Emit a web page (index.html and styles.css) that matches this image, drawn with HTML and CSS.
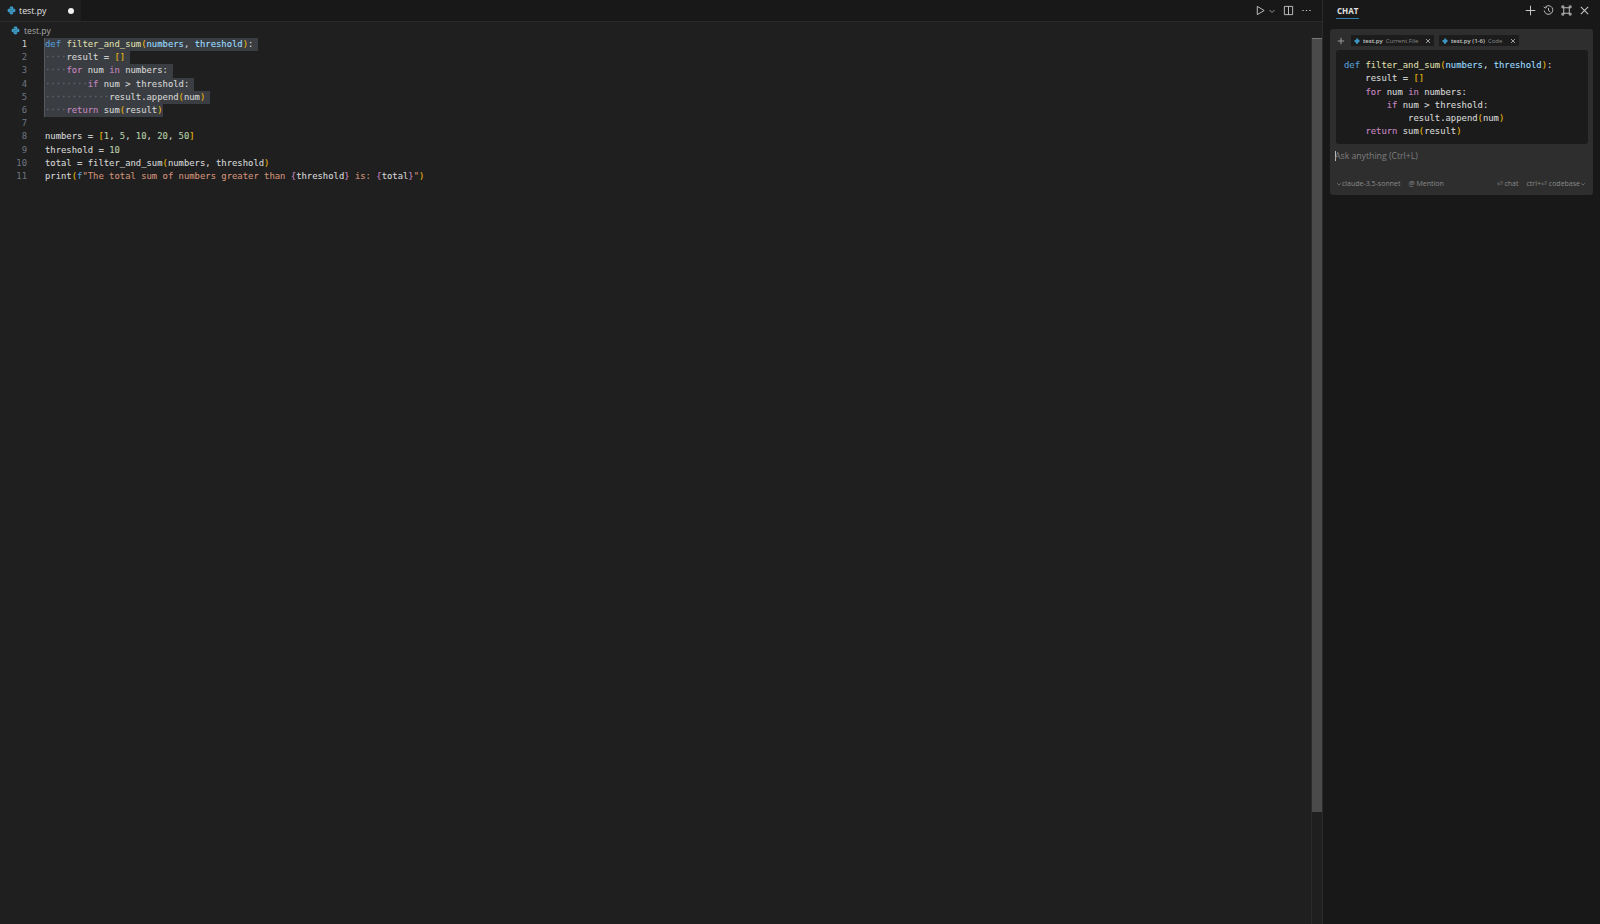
FILE: index.html
```html
<!DOCTYPE html>
<html lang="en">
<head>
<meta charset="utf-8">
<title>test.py</title>
<link rel="stylesheet" href="styles.css">
</head>
<body>
<svg class="defs" width="0" height="0" aria-hidden="true">
  <symbol id="py" viewBox="0 0 16 16">
    <path d="M7.800 1C5.500 1 5 2 5 3v1.500h3.200V5H3.200C2 5 1 6 1 8s1 3.200 2.200 3.200H5V9.600C5 8.600 5.900 7.800 7 7.800h2.600c1 0 1.700-.8 1.700-1.700V3c0-1.100-1.300-2-3.500-2z" fill="#3d9ac4"/>
    <path d="M8.200 15c2.300 0 2.800-1 2.800-2v-1.500H7.800V11h5c1.200 0 2.200-1 2.200-3s-1-3.200-2.200-3.200H11v1.600c0 1-.9 1.800-2 1.800H6.400c-1 0-1.700.8-1.700 1.700V13c0 1.100 1.300 2 3.500 2z" fill="#3d9ac4"/>
  </symbol>
</svg>
<div class="app">
  <main class="editor">
    <header class="tabbar">
      <div class="tab">
        <svg class="py-icon"><use href="#py"/></svg>
        <span class="tab-name">test.py</span>
        <span class="dirty"></span>
      </div>
      <div class="actions">
        <svg class="ico" viewBox="0 0 12 12"><path d="M2.500 1.500v9l7.500-4.500z" fill="none" stroke="#c8c8c8" stroke-width="1"/></svg>
        <svg class="ico-s" viewBox="0 0 8 8"><path d="M1.500 3l2.500 2.500L6.500 3" fill="none" stroke="#a0a0a0" stroke-width=".9"/></svg>
        <svg class="ico split" viewBox="0 0 12 12"><path d="M1.500 1.500h9v9h-9zM6 1.500v9" fill="none" stroke="#c8c8c8" stroke-width="1"/></svg>
        <svg class="ico dots" viewBox="0 0 12 12"><path d="M1.500 6h1.400M5.300 6h1.400M9.100 6h1.400" stroke="#c8c8c8" stroke-width="1.200"/></svg>
      </div>
    </header>
    <nav class="crumb">
      <svg class="py-icon"><use href="#py"/></svg>
      <span>test.py</span>
    </nav>
    <section class="code-area">
      <div class="gutter">
        <div class="active">1</div><div>2</div><div>3</div><div>4</div><div>5</div><div>6</div><div>7</div><div>8</div><div>9</div><div>10</div><div>11</div>
      </div>
      <div class="code">
        <div class="ln"><span class="sel"><i class="k">def</i> <i class="f">filter_and_sum</i><i class="b">(</i><i class="p">numbers</i>, <i class="p">threshold</i><i class="b">)</i>:</span></div>
        <div class="ln"><span class="sel"><i class="d">····</i>result = <i class="b">[]</i></span></div>
        <div class="ln"><span class="sel"><i class="d">····</i><i class="c">for</i> num <i class="c">in</i> numbers:</span></div>
        <div class="ln"><span class="sel"><i class="d">········</i><i class="c">if</i> num &gt; threshold:</span></div>
        <div class="ln"><span class="sel"><i class="d">············</i>result.append<i class="b">(</i>num<i class="b">)</i></span></div>
        <div class="ln"><span class="sel end"><i class="d">····</i><i class="c">return</i> sum<i class="b">(</i>result<i class="b">)</i></span></div>
        <div class="ln">&nbsp;</div>
        <div class="ln">numbers = <i class="b">[</i><i class="n">1</i>, <i class="n">5</i>, <i class="n">10</i>, <i class="n">20</i>, <i class="n">50</i><i class="b">]</i></div>
        <div class="ln">threshold = <i class="n">10</i></div>
        <div class="ln">total = filter_and_sum<i class="b">(</i>numbers, threshold<i class="b">)</i></div>
        <div class="ln">print<i class="b">(</i><i class="k">f</i><i class="s">"The total sum of numbers greater than </i><i class="m">{</i>threshold<i class="m">}</i><i class="s"> is: </i><i class="m">{</i>total<i class="m">}</i><i class="s">"</i><i class="b">)</i></div>
      </div>
    </section>
    <div class="scrollbar"><div class="thumb"></div></div>
  </main>
  <aside class="chat">
    <header class="chat-head">
      <span class="chat-title">CHAT</span>
      <div class="chat-actions">
        <svg class="ico-l" viewBox="0 0 12 12"><path d="M6 .8v10.400M.8 6h10.400" stroke="#c8c8c8" stroke-width="1.100"/></svg>
        <svg class="ico-l" viewBox="0 0 12 12"><path d="M2.600 2.200A4.700 4.700 0 1 1 1.300 6M.9 1.800l1.500 1.700 1.800-1.200M6 3.300V6l2 1.500" fill="none" stroke="#c8c8c8" stroke-width="1"/></svg>
        <svg class="ico-l" viewBox="0 0 12 12"><path d="M3 3h6v6H3zM1 1h2v2H1zM9 1h2v2H9zM1 9h2v2H1zM9 9h2v2H9z" fill="none" stroke="#c8c8c8" stroke-width="1"/></svg>
        <svg class="ico-l" viewBox="0 0 12 12"><path d="M2 2l8 8M10 2l-8 8" stroke="#c8c8c8" stroke-width="1.100"/></svg>
      </div>
    </header>
    <div class="composer">
      <div class="tags">
        <svg class="tag-plus" viewBox="0 0 8 8"><path d="M4 .8v6.400M.8 4h6.400" stroke="#9a9a9a" stroke-width="1"/></svg>
        <span class="tag first"><svg class="tag-py"><use href="#py"/></svg><b>test.py</b><em>Current File</em><svg class="tag-x" viewBox="0 0 6 6"><path d="M1 1l4 4M5 1l-4 4" stroke="#c0c0c0" stroke-width=".8"/></svg></span>
        <span class="tag"><svg class="tag-py"><use href="#py"/></svg><b>test.py (1-6)</b><em>Code</em><svg class="tag-x" viewBox="0 0 6 6"><path d="M1 1l4 4M5 1l-4 4" stroke="#c0c0c0" stroke-width=".8"/></svg></span>
      </div>
      <div class="snippet">
        <div class="ln"><i class="k">def</i> <i class="f">filter_and_sum</i><i class="b">(</i><i class="p">numbers</i>, <i class="p">threshold</i><i class="b">)</i>:</div>
        <div class="ln">    result = <i class="b">[]</i></div>
        <div class="ln">    <i class="c">for</i> num <i class="c">in</i> numbers:</div>
        <div class="ln">        <i class="c">if</i> num &gt; threshold:</div>
        <div class="ln">            result.append<i class="b">(</i>num<i class="b">)</i></div>
        <div class="ln">    <i class="c">return</i> sum<i class="b">(</i>result<i class="b">)</i></div>
      </div>
      <div class="ask"><span class="caret"></span>Ask anything (Ctrl+L)</div>
      <div class="footer">
        <div class="foot-l">
          <span class="fi"><svg class="chev" viewBox="0 0 8 8"><path d="M1.500 3l2.500 2.500L6.500 3" fill="none" stroke="#8a8a8a" stroke-width=".9"/></svg>claude-3.5-sonnet</span>
          <span class="fi">@ Mention</span>
        </div>
        <div class="foot-r">
          <span class="fi">⏎ chat</span>
          <span class="fi">ctrl+⏎ codebase<svg class="chev" viewBox="0 0 8 8"><path d="M1.500 3l2.500 2.500L6.500 3" fill="none" stroke="#8a8a8a" stroke-width=".9"/></svg></span>
        </div>
      </div>
    </div>
  </aside>
</div>
</body>
</html>
```

FILE: styles.css
```css
* { box-sizing: border-box; }
html, body { margin: 0; height: 100%; overflow: hidden; background: #1f1f1f; }
body { font-family: "Open Sans", "Noto Sans", sans-serif; color: #ccc; }
.defs { position: absolute; }
i, em { font-style: normal; }

.app { display: flex; height: 924px; }

.editor { position: relative; width: 1323px; background: #1f1f1f; border-right: 1px solid #2b2b2b; }
.tabbar { height: 22px; background: #181818; display: flex; justify-content: space-between; border-bottom: 1px solid #2a2a2a; }
.tab { width: 81px; height: 21px; background: #1f1f1f; display: flex; align-items: center; padding-left: 7px; }
.py-icon { width: 9px; height: 9px; flex: none; }
.tab-name { font-size: 8.800px; color: #e0e0e0; margin-left: 3px; }
.dirty { width: 6px; height: 6px; border-radius: 50%; background: #f2f2f2; margin-left: 21px; }
.actions { display: flex; align-items: center; padding-right: 10px; }
.ico { width: 11px; height: 11px; }
.ico-s { width: 8px; height: 8px; margin-left: 2px; }
.split { margin-left: 7px; }
.dots { margin-left: 7px; }

.crumb { height: 15px; display: flex; align-items: center; gap: 4px; padding: 2px 0 0 11px; font-size: 8.600px; color: #a8a8a8; }
.code-area { display: flex; padding-top: 1px; }
.gutter { width: 45px; padding-right: 18px; text-align: right; font: 8.900px/13.200px "DejaVu Sans Mono", monospace; color: #6e7681; }
.gutter .active { color: #d0d0d0; }
.code { font: 8.900px/13.200px "DejaVu Sans Mono", monospace; color: #d4d4d4; -webkit-text-stroke: .1px; }
.ln { height: 13.200px; white-space: pre; }
.sel { display: inline-block; height: 13.200px; background: #3a3d41; padding-right: 5px; box-shadow: -1px 0 0 #55585c; }
.end { padding-right: 0; }
.k { color: #569cd6; }
.f { color: #dcdcaa; }
.p { color: #9cdcfe; }
.c { color: #c586c0; }
.b { color: #e8b90f; }
.n { color: #b5cea8; }
.s { color: #ce9178; }
.m { color: #c586c0; }
.d { color: #6a6d70; }

.scrollbar { position: absolute; top: 38px; right: 0; width: 11px; height: 886px; border-left: 1px solid #2a2a2a; }
.thumb { height: 774px; background: #4a4a4a; border-top: 1px solid #777; }

.chat { flex: 1; background: #181818; display: flex; flex-direction: column; padding: 0 7px 0 7px; }
.chat-head { height: 29px; display: flex; justify-content: space-between; align-items: flex-start; padding-top: 5px; }
.chat-title { font-size: 8px; font-weight: 700; color: #e0e0e0; margin-left: 6px; padding: 0 1px 2px; border-bottom: 1px solid #2f7fb0; line-height: 11px; }
.chat-actions { display: flex; gap: 7px; padding-right: 3px; }
.ico-l { width: 11px; height: 11px; }

.composer { background: #2e2e2e; border-radius: 3px; height: 166px; padding: 6px 5px 0 6px; }
.tags { display: flex; align-items: center; height: 11px; margin-bottom: 4px; }
.tag-plus { width: 8px; height: 8px; margin: 0 6px 0 1px; }
.tag { display: flex; align-items: center; height: 11px; background: #1c1c1c; font-size: 6px; padding: 0 3px 0 3px; margin-right: 5px; color: #8a8a8a; }
.tag.first { width: 83px; }
.tag.first + .tag { width: 80px; }
.tag-py { width: 6px; height: 6px; margin-right: 3px; }
.tag b { color: #c8c8c8; font-weight: 600; margin-right: 3px; white-space: nowrap; }
.tag em { white-space: nowrap; }
.tag-x { width: 6px; height: 6px; margin-left: auto; }

.snippet { background: #1b1b1b; border-radius: 3px; height: 94px; padding: 9px 8px; font: 8.900px/13.300px "DejaVu Sans Mono", monospace; color: #d4d4d4; -webkit-text-stroke: .1px; }
.snippet .ln { height: 13.300px; }

.ask { display: flex; align-items: center; height: 12px; margin-top: 6px; font-size: 8.700px; color: #7f7f7f; margin-left: -1px; }
.caret { width: 1px; height: 10px; background: #bbb; margin-right: -1px; }
.footer { display: flex; justify-content: space-between; margin-top: 17px; font-size: 7px; color: #8a8a8a; padding: 0 2px 0 0; line-height: 10px; }
.foot-l, .foot-r { display: flex; gap: 8px; }
.fi { display: flex; align-items: center; white-space: pre; }
.chev { width: 6px; height: 6px; }
```
